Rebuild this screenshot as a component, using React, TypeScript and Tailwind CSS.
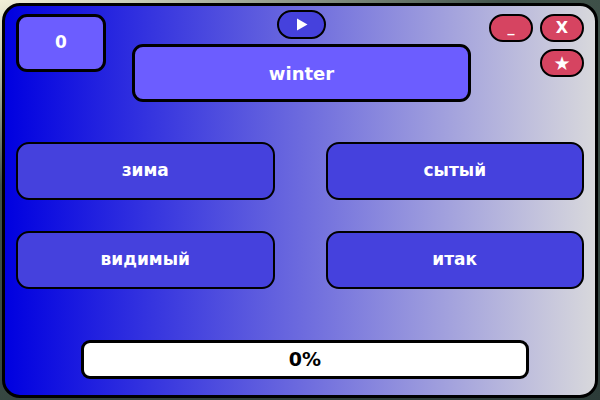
import { useState } from "react";

const answers = ["зима", "сытый", "видимый", "итак"];

export default function App() {
  const [score] = useState(0);
  const [progress] = useState(0);

  return (
    <div
      className="w-[600px] h-[400px] overflow-hidden bg-[linear-gradient(160deg,#f2f0d8_0%,#c9cdb8_8%,#40524a_30%,#2c3b38_100%)]"
      style={{ fontFamily: '"DejaVu Sans", Verdana, sans-serif' }}
    >
      <div className="relative ml-[2px] mt-[3px] w-[596px] h-[395px] rounded-[18px] border-[3px] border-black bg-[linear-gradient(to_right,#0000e0,#6c6ade_50%,#d8d8dc)] pl-[11px] pr-[11px] pt-[4px]">
        {/* window controls */}
        <div className="absolute top-[8px] right-[11px] flex flex-col items-end gap-[7px]">
          <div className="flex gap-[7px]">
            <button className="w-[44px] h-[28px] rounded-full border-2 border-black bg-[#d64461] text-white font-bold text-[14px] leading-none flex items-end justify-center pb-[6px]">
              _
            </button>
            <button className="w-[44px] h-[28px] rounded-full border-2 border-black bg-[#d64461] text-white font-bold text-[16px] leading-none flex items-center justify-center">
              X
            </button>
          </div>
          <button className="w-[44px] h-[28px] rounded-full border-2 border-black bg-[#d64461] text-white text-[19px] leading-none flex items-center justify-center">
            ★
          </button>
        </div>

        {/* header */}
        <div className="flex items-start">
          <div className="mt-[4px] w-[90px] h-[58px] rounded-[11px] border-[3px] border-black bg-[#6c5dff] text-white font-bold text-[17px] flex items-center justify-center">
            {score}
          </div>
          <div className="ml-[26px] w-[339px] flex flex-col items-center gap-[5px]">
            <button className="w-[49px] h-[29px] rounded-full border-2 border-black bg-[#4541dd] flex items-center justify-center">
              <svg width="12" height="13" viewBox="0 0 12 13">
                <path d="M1 0.5 L11.5 6.5 L1 12.5 Z" fill="#fff" />
              </svg>
            </button>
            <div className="w-full h-[58px] rounded-[11px] border-[3px] border-black bg-[#6c5dff] text-white font-bold text-[18px] flex items-center justify-center">
              winter
            </div>
          </div>
        </div>

        {/* answers */}
        <div className="mt-[40px] grid grid-cols-2 gap-x-[51px] gap-y-[31px]">
          {answers.map((a) => (
            <button
              key={a}
              className="h-[58px] rounded-[13px] border-2 border-black bg-[#4541dd] text-white font-bold text-[17px] flex items-center justify-center"
            >
              {a}
            </button>
          ))}
        </div>

        {/* progress */}
        <div className="mt-[51px] ml-[65px] w-[448px] h-[39px] rounded-[9px] border-[3px] border-black bg-white text-black font-bold text-[19px] flex items-center justify-center">
          {progress}%
        </div>
      </div>
    </div>
  );
}
